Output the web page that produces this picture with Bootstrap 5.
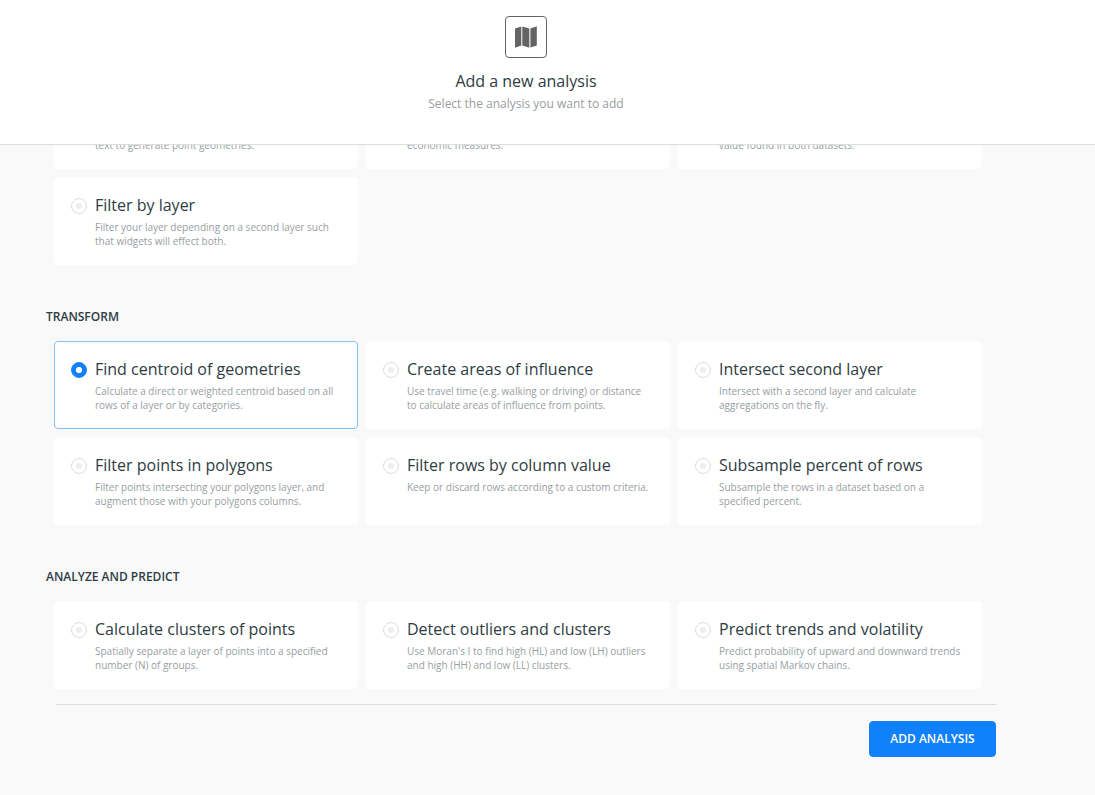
<!DOCTYPE html>
<html lang="en">
<head>
<meta charset="utf-8">
<meta name="viewport" content="width=device-width, initial-scale=1">
<title>Add a new analysis</title>
<link href="https://cdn.jsdelivr.net/npm/bootstrap@5.3.0/dist/css/bootstrap.min.css" rel="stylesheet">
<style>
  body { font-family: "Open Sans", sans-serif; color: #2e3c43; background: #f9f9f9; }
  .dialog-head { height: 145px; padding-top: 16px; border-bottom: 1px solid #ddd; }
  .dialog-inner { width: 940px; margin-left: 56px; }
  .head-icon { width: 42px; height: 42px; border: 1px solid #636363; border-radius: 4px; }
  .head-title { font-size: 16px; line-height: 22px; margin-top: 12px; }
  .head-sub { font-size: 12px; line-height: 16px; margin-top: 4px; color: #979ea1; }
  .option-pane { height: 559px; padding: 0 0 15px 46px; }
  .option-grid { display: grid; grid-template-columns: repeat(3, 304px); gap: 8px; padding-left: 8px; }
  .group-title { font-size: 12px; line-height: 16px; font-weight: 600; margin: 44px 0 16px; }
  .option { height: 88px; padding: 16px; gap: 8px; background: #fff; border: 1px solid #fff; border-radius: 4px; }
  .option.selected { border-color: #88c0fe; }
  .option h2 { font-size: 16px; line-height: 22px; margin: 0 0 4px; font-weight: 400; }
  .option p { font-size: 10px; line-height: 14px; margin: 0; color: #979ea1; white-space: nowrap; }
  .option-radio { appearance: none; flex: none; width: 16px; height: 16px; margin: 4px 0 0; border: 1px solid #ddd; border-radius: 50%; background: radial-gradient(circle, #eee 2.8px, #fff 3.4px); }
  .option-radio:checked { border-color: #1181fb; background: radial-gradient(circle, #fff 2.8px, #1181fb 3.4px); }
  .dialog-foot { border-top: 1px solid #ddd; padding-top: 16px; }
  .btn-add { --bs-btn-bg: #1181fb; --bs-btn-border-color: #1181fb; --bs-btn-color: #fff; width: 127px; height: 36px; padding: 0; font-size: 12px; font-weight: 600; line-height: 16px; border-radius: 4px; }
</style>
</head>
<body class="overflow-hidden">
<header class="dialog-head bg-white">
  <div class="dialog-inner d-flex flex-column align-items-center">
    <div class="head-icon d-flex align-items-center justify-content-center">
      <svg width="24" height="24" viewBox="0 0 24 24" fill="#636363" aria-hidden="true">
        <path d="M1 3.6 7.3 1.4V20.500L1 22.700zM8.300 1.400 15.300 3.500V22.700L8.300 20.500zM16.400 3.500 22.800 1.300V20.400L16.400 22.600z"/>
      </svg>
    </div>
    <h1 class="head-title fw-normal mb-0">Add a new analysis</h1>
    <p class="head-sub mb-0">Select the analysis you want to add</p>
  </div>
</header>
<main>
  <div class="option-pane d-flex flex-column justify-content-end overflow-hidden">
    <div class="option-grid">
      <label class="option d-flex"><input class="option-radio" type="radio" name="a"><div><h2>Georeference</h2><p>Transform columns of coordinates or<br>text to generate point geometries.</p></div></label>
      <label class="option d-flex"><input class="option-radio" type="radio" name="a"><div><h2>Enrich from Data Observatory</h2><p>Add demographic, social and<br>economic measures.</p></div></label>
      <label class="option d-flex"><input class="option-radio" type="radio" name="a"><div><h2>Add columns from second layer</h2><p>Combine two layers by a common<br>value found in both datasets.</p></div></label>
      <label class="option d-flex"><input class="option-radio" type="radio" name="a"><div><h2>Filter by layer</h2><p>Filter your layer depending on a second layer such<br>that widgets will effect both.</p></div></label>
    </div>
    <h3 class="group-title">TRANSFORM</h3>
    <div class="option-grid">
      <label class="option selected d-flex"><input class="option-radio" type="radio" name="a" checked><div><h2>Find centroid of geometries</h2><p>Calculate a direct or weighted centroid based on all<br>rows of a layer or by categories.</p></div></label>
      <label class="option d-flex"><input class="option-radio" type="radio" name="a"><div><h2>Create areas of influence</h2><p>Use travel time (e.g. walking or driving) or distance<br>to calculate areas of influence from points.</p></div></label>
      <label class="option d-flex"><input class="option-radio" type="radio" name="a"><div><h2>Intersect second layer</h2><p>Intersect with a second layer and calculate<br>aggregations on the fly.</p></div></label>
      <label class="option d-flex"><input class="option-radio" type="radio" name="a"><div><h2>Filter points in polygons</h2><p>Filter points intersecting your polygons layer, and<br>augment those with your polygons columns.</p></div></label>
      <label class="option d-flex"><input class="option-radio" type="radio" name="a"><div><h2>Filter rows by column value</h2><p>Keep or discard rows according to a custom criteria.</p></div></label>
      <label class="option d-flex"><input class="option-radio" type="radio" name="a"><div><h2>Subsample percent of rows</h2><p>Subsample the rows in a dataset based on a<br>specified percent.</p></div></label>
    </div>
    <h3 class="group-title">ANALYZE AND PREDICT</h3>
    <div class="option-grid">
      <label class="option d-flex"><input class="option-radio" type="radio" name="a"><div><h2>Calculate clusters of points</h2><p>Spatially separate a layer of points into a specified<br>number (N) of groups.</p></div></label>
      <label class="option d-flex"><input class="option-radio" type="radio" name="a"><div><h2>Detect outliers and clusters</h2><p>Use Moran's I to find high (HL) and low (LH) outliers<br>and high (HH) and low (LL) clusters.</p></div></label>
      <label class="option d-flex"><input class="option-radio" type="radio" name="a"><div><h2>Predict trends and volatility</h2><p>Predict probability of upward and downward trends<br>using spatial Markov chains.</p></div></label>
    </div>
  </div>
  <div class="dialog-inner dialog-foot d-flex justify-content-end">
    <button type="button" class="btn btn-add">ADD ANALYSIS</button>
  </div>
</main>
<script src="https://cdn.jsdelivr.net/npm/bootstrap@5.3.0/dist/js/bootstrap.bundle.min.js"></script>
</body>
</html>
